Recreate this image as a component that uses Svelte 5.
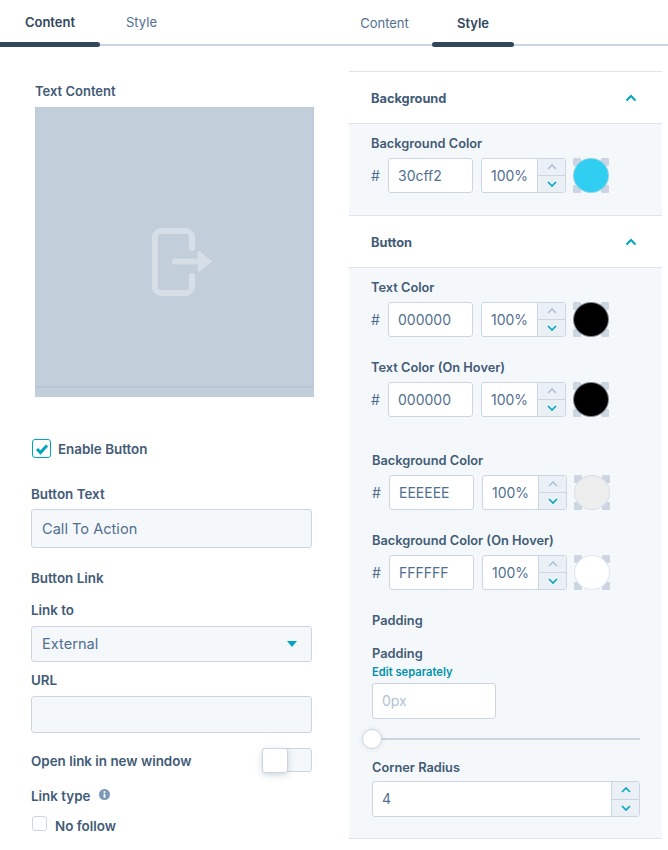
<script>
  const textColors = [
    { label: 'Text Color', hex: '000000', fill: '#000000' },
    { label: 'Text Color (On Hover)', hex: '000000', fill: '#000000' }
  ];
  const bgColors = [
    { label: 'Background Color', hex: 'EEEEEE', fill: '#eeeeee' },
    { label: 'Background Color (On Hover)', hex: 'FFFFFF', fill: '#ffffff' }
  ];
</script>

{#snippet spinner()}
  <div class="spin">
    <span class="up">
      <svg width="10" height="6" viewBox="0 0 10 6"><path d="M1 5l4-4 4 4" /></svg>
    </span>
    <span class="down">
      <svg width="10" height="6" viewBox="0 0 10 6"><path d="M1 1l4 4 4-4" /></svg>
    </span>
  </div>
{/snippet}

{#snippet colorRow(hex, fill)}
  <div class="color-row">
    <span class="hash">#</span>
    <div class="hex">{hex}</div>
    <div class="pct">
      <span class="pct-val">100%</span>
      {@render spinner()}
    </div>
    <div class="swatch">
      <i></i><i></i><i></i><i></i>
      <span class="dot" style="background:{fill}"></span>
    </div>
  </div>
{/snippet}

<div class="page">
  <section class="left">
    <nav class="tabs">
      <div class="tab active first">Content</div>
      <div class="tab second">Style</div>
    </nav>

    <div class="left-body">
      <div class="label text-content">Text Content</div>
      <div class="preview">
        <svg width="60" height="68" viewBox="0 0 60 68" fill="none">
          <path d="M40 20V9a6 6 0 0 0-6-6H9a6 6 0 0 0-6 6v50a6 6 0 0 0 6 6h25a6 6 0 0 0 6-6V48" stroke="#d6dee8" stroke-width="6" stroke-linecap="round" />
          <path d="M23 33.5h25" stroke="#d6dee8" stroke-width="6" stroke-linecap="round" />
          <path d="M47 24.5l11.5 9-11.5 9z" fill="#d6dee8" stroke="#d6dee8" stroke-width="2.5" stroke-linejoin="round" />
        </svg>
      </div>

      <div class="check-row enable">
        <span class="check on">
          <svg width="14" height="12" viewBox="0 0 14 12" fill="none"><path d="M2 6l3.5 3.5L12 2.5" stroke="#00a4bd" stroke-width="3" /></svg>
        </span>
        <span class="label">Enable Button</span>
      </div>

      <div class="label btn-text">Button Text</div>
      <div class="field tall">Call To Action</div>

      <div class="label btn-link">Button Link</div>
      <div class="label link-to">Link to</div>
      <div class="field select">
        <span>External</span>
        <span class="caret"></span>
      </div>

      <div class="label url">URL</div>
      <div class="field url-field"></div>

      <div class="switch-row">
        <span class="label">Open link in new window</span>
        <div class="switch"><span class="knob"></span></div>
      </div>

      <div class="label link-type">
        Link type
        <svg class="info" width="11" height="11" viewBox="0 0 11 11">
          <circle cx="5.5" cy="5.5" r="5.5" fill="#7c98b6" />
          <rect x="4.6" y="4.7" width="1.8" height="4" fill="#fff" />
          <rect x="4.6" y="2.2" width="1.8" height="1.7" fill="#fff" />
        </svg>
      </div>

      <div class="check-row nofollow">
        <span class="check small"></span>
        <span class="label">No follow</span>
      </div>
    </div>
  </section>

  <section class="right">
    <nav class="tabs">
      <div class="tab r-first">Content</div>
      <div class="tab active r-second">Style</div>
    </nav>

    <div class="acc first-acc">
      <header class="acc-head">
        <span>Background</span>
        <svg width="12" height="8" viewBox="0 0 12 8" fill="none"><path d="M1.5 6.5L6 2l4.5 4.5" stroke="#00a4bd" stroke-width="2" /></svg>
      </header>
      <div class="panel bg-panel">
        <div class="label">Background Color</div>
        {@render colorRow('30cff2', '#30cff2')}
      </div>
    </div>

    <div class="acc">
      <header class="acc-head">
        <span>Button</span>
        <svg width="12" height="8" viewBox="0 0 12 8" fill="none"><path d="M1.5 6.5L6 2l4.5 4.5" stroke="#00a4bd" stroke-width="2" /></svg>
      </header>
      <div class="panel btn-panel">
        <div class="group">
          {#each textColors as c}
            <div class="color-block">
              <div class="label">{c.label}</div>
              {@render colorRow(c.hex, c.fill)}
            </div>
          {/each}
        </div>
        <div class="group shifted">
          {#each bgColors as c}
            <div class="color-block">
              <div class="label">{c.label}</div>
              {@render colorRow(c.hex, c.fill)}
            </div>
          {/each}
        </div>

        <div class="inset">
          <div class="label pad-title">Padding</div>
          <div class="label pad-label">Padding</div>
          <div class="edit">Edit separately</div>
          <div class="pad-input">0px</div>
        </div>

        <div class="slider"><span class="thumb"></span></div>

        <div class="inset">
          <div class="label radius-label">Corner Radius</div>
          <div class="radius">
            <span class="radius-val">4</span>
            {@render spinner()}
          </div>
        </div>
      </div>
    </div>
  </section>
</div>

<style>
  :global(body) {
    margin: 0;
    background: #fff;
  }

  .page {
    width: 668px;
    height: 850px;
    overflow: hidden;
    display: flex;
    font-family: Inter, "Liberation Sans", sans-serif;
    color: #33475b;
  }

  .left {
    width: 337px;
    flex: none;
  }
  .right {
    flex: 1;
    min-width: 0;
  }

  .tabs {
    display: flex;
    height: 46px;
    box-sizing: border-box;
    border-bottom: 2px solid #cbd6e2;
    font-size: 13px;
  }
  .tab {
    height: 47px;
    box-sizing: border-box;
    padding-top: 14px;
    text-align: center;
    color: #516f90;
  }
  .tab.active {
    color: #33475b;
    font-weight: 600;
    position: relative;
  }
  .tab.active::after {
    content: "";
    position: absolute;
    left: 0;
    right: 0;
    bottom: 0;
    height: 5px;
    background: #33475b;
    border-radius: 0 3px 3px 0;
  }
  .first {
    width: 100px;
  }
  .second {
    width: 83px;
  }
  .r-first {
    width: 95px;
    padding-top: 15px;
  }
  .r-second {
    width: 82px;
    padding-top: 15px;
  }
  .r-second::after {
    border-radius: 3px !important;
  }

  .left-body {
    padding: 0 25px 0 31px;
  }

  .label {
    font-size: 12.8px;
    font-weight: 600;
    line-height: 16px;
    color: #425b76;
  }
  .panel .label {
    padding-top: 1px;
    margin-bottom: -1px;
  }
  .left-body .label {
    font-size: 13.4px;
  }

  .left-body .text-content {
    margin: 37px 0 0 4px;
    font-size: 13px;
  }
  .preview {
    margin: 8px -2px 0 4px;
    height: 290px;
    box-sizing: border-box;
    background: #c3cedb;
    box-shadow: inset 0 -9px 0 #c3cedb, inset 0 -11px 0 #bac7d6, inset 0 0 0 1px #bdc9d8;
    display: flex;
    align-items: center;
    justify-content: center;
    padding: 29px 0 9px 14px;
  }

  .check-row {
    display: flex;
    align-items: center;
  }
  .check {
    box-sizing: border-box;
    flex: none;
    background: #fff;
    display: flex;
    align-items: center;
    justify-content: center;
  }
  .check.on {
    width: 19px;
    height: 19px;
    margin-left: 1px;
    border: 1.5px solid #00a4bd;
    border-radius: 3px;
  }
  .enable {
    gap: 7px;
    margin-top: 42px;
  }
  .btn-text {
    margin-top: 28px;
  }

  .field {
    box-sizing: border-box;
    background: #f5f8fa;
    border: 1px solid #cbd6e2;
    border-radius: 3px;
    padding: 0 10px;
    font-size: 14.6px;
    color: #516f90;
    display: flex;
    align-items: center;
  }
  .tall {
    height: 39px;
    margin-top: 7px;
  }
  .btn-link {
    margin-top: 22px;
  }
  .link-to {
    margin-top: 16px;
  }
  .select {
    height: 36px;
    margin-top: 8px;
    justify-content: space-between;
    padding-right: 14px;
  }
  .caret {
    width: 0;
    height: 0;
    border-left: 5.5px solid transparent;
    border-right: 5.5px solid transparent;
    border-top: 6px solid #00a4bd;
  }
  .url {
    margin-top: 10px;
  }
  .url-field {
    height: 37px;
    margin-top: 8px;
  }

  .switch-row {
    margin-top: 14px;
    height: 25px;
    display: flex;
    align-items: center;
    justify-content: space-between;
  }
  .switch-row .label {
    padding-top: 3px;
  }
  .switch {
    width: 50px;
    height: 24px;
    box-sizing: border-box;
    background: #f5f8fa;
    border: 1px solid #cbd6e2;
    border-radius: 3px;
    position: relative;
  }
  .knob {
    position: absolute;
    left: -1px;
    top: -1px;
    width: 26px;
    height: 25px;
    box-sizing: border-box;
    background: #fff;
    border: 1px solid #cbd6e2;
    border-radius: 3px;
    box-shadow: 0 2px 6px rgba(66, 91, 118, 0.25);
  }

  .link-type {
    margin-top: 16px;
    display: flex;
    align-items: center;
    gap: 9px;
  }
  .info {
    margin-top: -3px;
  }
  .check.small {
    width: 15px;
    height: 15px;
    margin-left: 1px;
    border: 1px solid #cbd6e2;
    border-radius: 3px;
  }
  .nofollow {
    gap: 8px;
    margin-top: 12px;
    align-items: flex-start;
  }
  .nofollow .label {
    padding-top: 2px;
  }

  .first-acc {
    margin-top: 25px;
    border-top: 1px solid #dfe3eb;
  }
  .acc {
    margin-left: 12px;
    margin-right: 6px;
  }
  .acc-head {
    height: 52px;
    box-sizing: border-box;
    padding: 1px 25px 0 22px;
    display: flex;
    align-items: center;
    justify-content: space-between;
    font-size: 12.8px;
    font-weight: 700;
    color: #425b76;
    border-bottom: 1px solid #dfe3eb;
  }
  .panel {
    background: #f5f8fa;
    border-bottom: 1px solid #dfe3eb;
    box-sizing: border-box;
  }
  .bg-panel {
    height: 92px;
    padding: 11px 0 0 22px;
  }
  .btn-panel {
    height: 571px;
    padding-top: 11px;
    padding-left: 22px;
  }

  .color-row {
    display: flex;
    align-items: center;
    margin-top: 7px;
    height: 35px;
  }
  .hash {
    width: 17px;
    font-size: 14px;
    color: #516f90;
  }
  .hex {
    width: 85px;
    height: 35px;
    box-sizing: border-box;
    background: #fff;
    border: 1px solid #cbd6e2;
    border-radius: 3px;
    padding-left: 9px;
    font-size: 14px;
    line-height: 33px;
    color: #516f90;
  }
  .pct {
    margin-left: 8px;
    width: 85px;
    height: 35px;
    box-sizing: border-box;
    background: #fff;
    border: 1px solid #cbd6e2;
    border-radius: 3px;
    display: flex;
    font-size: 14px;
    color: #516f90;
  }
  .pct-val {
    flex: 1;
    padding-left: 9px;
    line-height: 33px;
  }
  .spin {
    width: 27px;
    flex: none;
    display: flex;
    flex-direction: column;
    background: #eaf0f6;
    border-left: 1px solid #cbd6e2;
  }
  .spin span {
    flex: 1;
    display: flex;
    align-items: center;
    justify-content: center;
  }
  .spin svg {
    fill: none;
    stroke-width: 1.6;
  }
  .up {
    border-bottom: 1px solid #cbd6e2;
  }
  .up svg {
    stroke: #b0c1d4;
  }
  .down svg {
    stroke: #00a4bd;
  }
  .radius .up svg {
    stroke: #00a4bd;
  }

  .swatch {
    margin-left: 7px;
    width: 36px;
    height: 35px;
    position: relative;
    display: grid;
    grid-template-columns: 1fr 1fr;
    justify-content: space-between;
    align-content: space-between;
  }
  .swatch i {
    width: 8px;
    height: 8px;
    background: #cbd6e2;
    border-radius: 1px;
    justify-self: start;
  }
  .swatch i:nth-child(even) {
    justify-self: end;
  }
  .swatch i:nth-child(n + 3) {
    align-self: end;
  }
  .dot {
    position: absolute;
    inset: 0;
    border-radius: 50%;
    box-sizing: border-box;
    border: 1px solid rgba(203, 214, 226, 0.6);
  }

  .group {
    display: flex;
    flex-direction: column;
    gap: 22px;
  }
  .shifted {
    margin: 35px 0 0 1px;
  }

  .inset {
    margin-left: 1px;
  }
  .pad-title {
    margin-top: 22px;
  }
  .pad-label {
    margin-top: 17px;
  }
  .edit {
    margin-top: 4px;
    font-size: 11.2px;
    font-weight: 600;
    line-height: 14px;
    color: #0091ae;
  }
  .pad-input {
    margin-top: 4px;
    width: 124px;
    height: 36px;
    box-sizing: border-box;
    background: #fff;
    border: 1px solid #cbd6e2;
    border-radius: 3px;
    padding-left: 9px;
    line-height: 34px;
    font-size: 14px;
    color: #b0c1d4;
  }

  .slider {
    margin: 10px 0 0 1px;
    width: 268px;
    height: 20px;
    display: flex;
    align-items: center;
    position: relative;
  }
  .slider::before {
    content: "";
    flex: 1;
    height: 2px;
    background: #cbd6e2;
  }
  .thumb {
    position: absolute;
    left: -10px;
    top: 0;
    width: 20px;
    height: 20px;
    box-sizing: border-box;
    background: #fff;
    border: 1px solid #cbd6e2;
    border-radius: 50%;
    box-shadow: 0 0 6px rgba(66, 91, 118, 0.12);
  }

  .radius-label {
    margin-top: 10px;
  }
  .radius {
    margin-top: 6px;
    width: 268px;
    height: 36px;
    box-sizing: border-box;
    background: #fff;
    border: 1px solid #cbd6e2;
    border-radius: 3px;
    display: flex;
    font-size: 14px;
    color: #516f90;
  }
  .radius-val {
    flex: 1;
    padding-left: 9px;
    line-height: 34px;
  }
</style>
